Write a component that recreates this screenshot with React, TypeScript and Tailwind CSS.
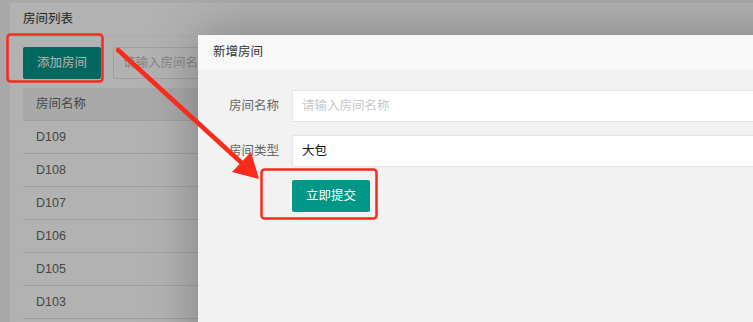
const rooms = ['D109', 'D108', 'D107', 'D106', 'D105', 'D103'];

const font = 'font-["Liberation_Sans","Noto_Sans_CJK_SC",sans-serif]';

export default function App() {
  return (
    <div className={`relative w-[753px] h-[322px] overflow-hidden bg-[#f2f2f2] ${font}`}>
      {/* page behind the dialog */}
      <div className="pt-[3px] pl-[10px]">
        <div className="w-[820px] h-[340px] bg-white rounded-[2px]">
          <div className="h-[34px] px-[13px] flex items-center border-b border-[#f6f6f6] text-[12.5px] text-[#333]">
            房间列表
          </div>
          <div className="px-[13px] pt-[10px]">
            <div className="flex gap-[12px]">
              <button className="w-[78px] h-[32px] bg-[#009688] text-white text-[12.5px] rounded-[2px]">添加房间</button>
              <div className="w-[200px] h-[32px] border border-[#e6e6e6] rounded-[2px] flex items-center px-[9px] text-[12.5px] text-[#c2c2c2]">
                请输入房间名称
              </div>
            </div>
            <div className="mt-[9px]">
              <div className="h-[33px] bg-[#f2f2f2] border-b border-[#e6e6e6] flex items-center px-[13px] text-[12.5px] text-[#666]">
                房间名称
              </div>
              {rooms.map((r) => (
                <div key={r} className="h-[33px] border-b border-[#e6e6e6] flex items-center px-[13px] text-[12.5px] text-[#666]">
                  {r}
                </div>
              ))}
            </div>
          </div>
        </div>
      </div>

      {/* shade */}
      <div className="absolute inset-0 bg-black/30" />

      {/* dialog */}
      <div className="absolute left-[198px] top-[35px] w-[620px] h-[330px] bg-[#f2f2f2] shadow-[1px_1px_50px_rgba(0,0,0,0.3)]">
        <div className="h-[36px] bg-[#f8f8f8] border-b border-[#eeeeee] flex items-center px-[15px] text-[12.5px] text-[#333]">
          新增房间
        </div>
        <div className="pt-[19px] flex flex-col gap-[13px]">
          <div className="flex items-center">
            <div className="w-[94px] pr-[13px] text-right text-[12.5px] text-[#666]">房间名称</div>
            <div className="flex-1 h-[32px] bg-white border border-[#e6e6e6] flex items-center px-[9px] text-[12.5px] text-[#c8c8c8]">
              请输入房间名称
            </div>
          </div>
          <div className="flex items-center">
            <div className="w-[94px] pr-[13px] text-right text-[12.5px] text-[#666]">房间类型</div>
            <div className="flex-1 h-[32px] bg-white border border-[#e6e6e6] flex items-center px-[9px] text-[12.5px] text-[#111]">
              大包
            </div>
          </div>
          <div className="pl-[94px]">
            <button className="w-[78px] h-[32px] bg-[#009688] text-white text-[12.5px] rounded-[2px]">立即提交</button>
          </div>
        </div>
      </div>

      {/* annotations */}
      <svg className="absolute inset-0 pointer-events-none" width="753" height="322" viewBox="0 0 753 322">
        <rect x="7.5" y="34.5" width="95" height="47" rx="3" fill="none" stroke="#fa2a1c" strokeWidth="2.5" />
        <rect x="261.5" y="169.5" width="115" height="49" rx="3" fill="none" stroke="#fa2a1c" strokeWidth="2.5" />
        <line x1="118" y1="50" x2="244" y2="165" stroke="#fa2a1c" strokeWidth="4.5" strokeLinecap="round" />
        <polygon points="259,179 232,172 251,152" fill="#fa2a1c" />
      </svg>
    </div>
  );
}
